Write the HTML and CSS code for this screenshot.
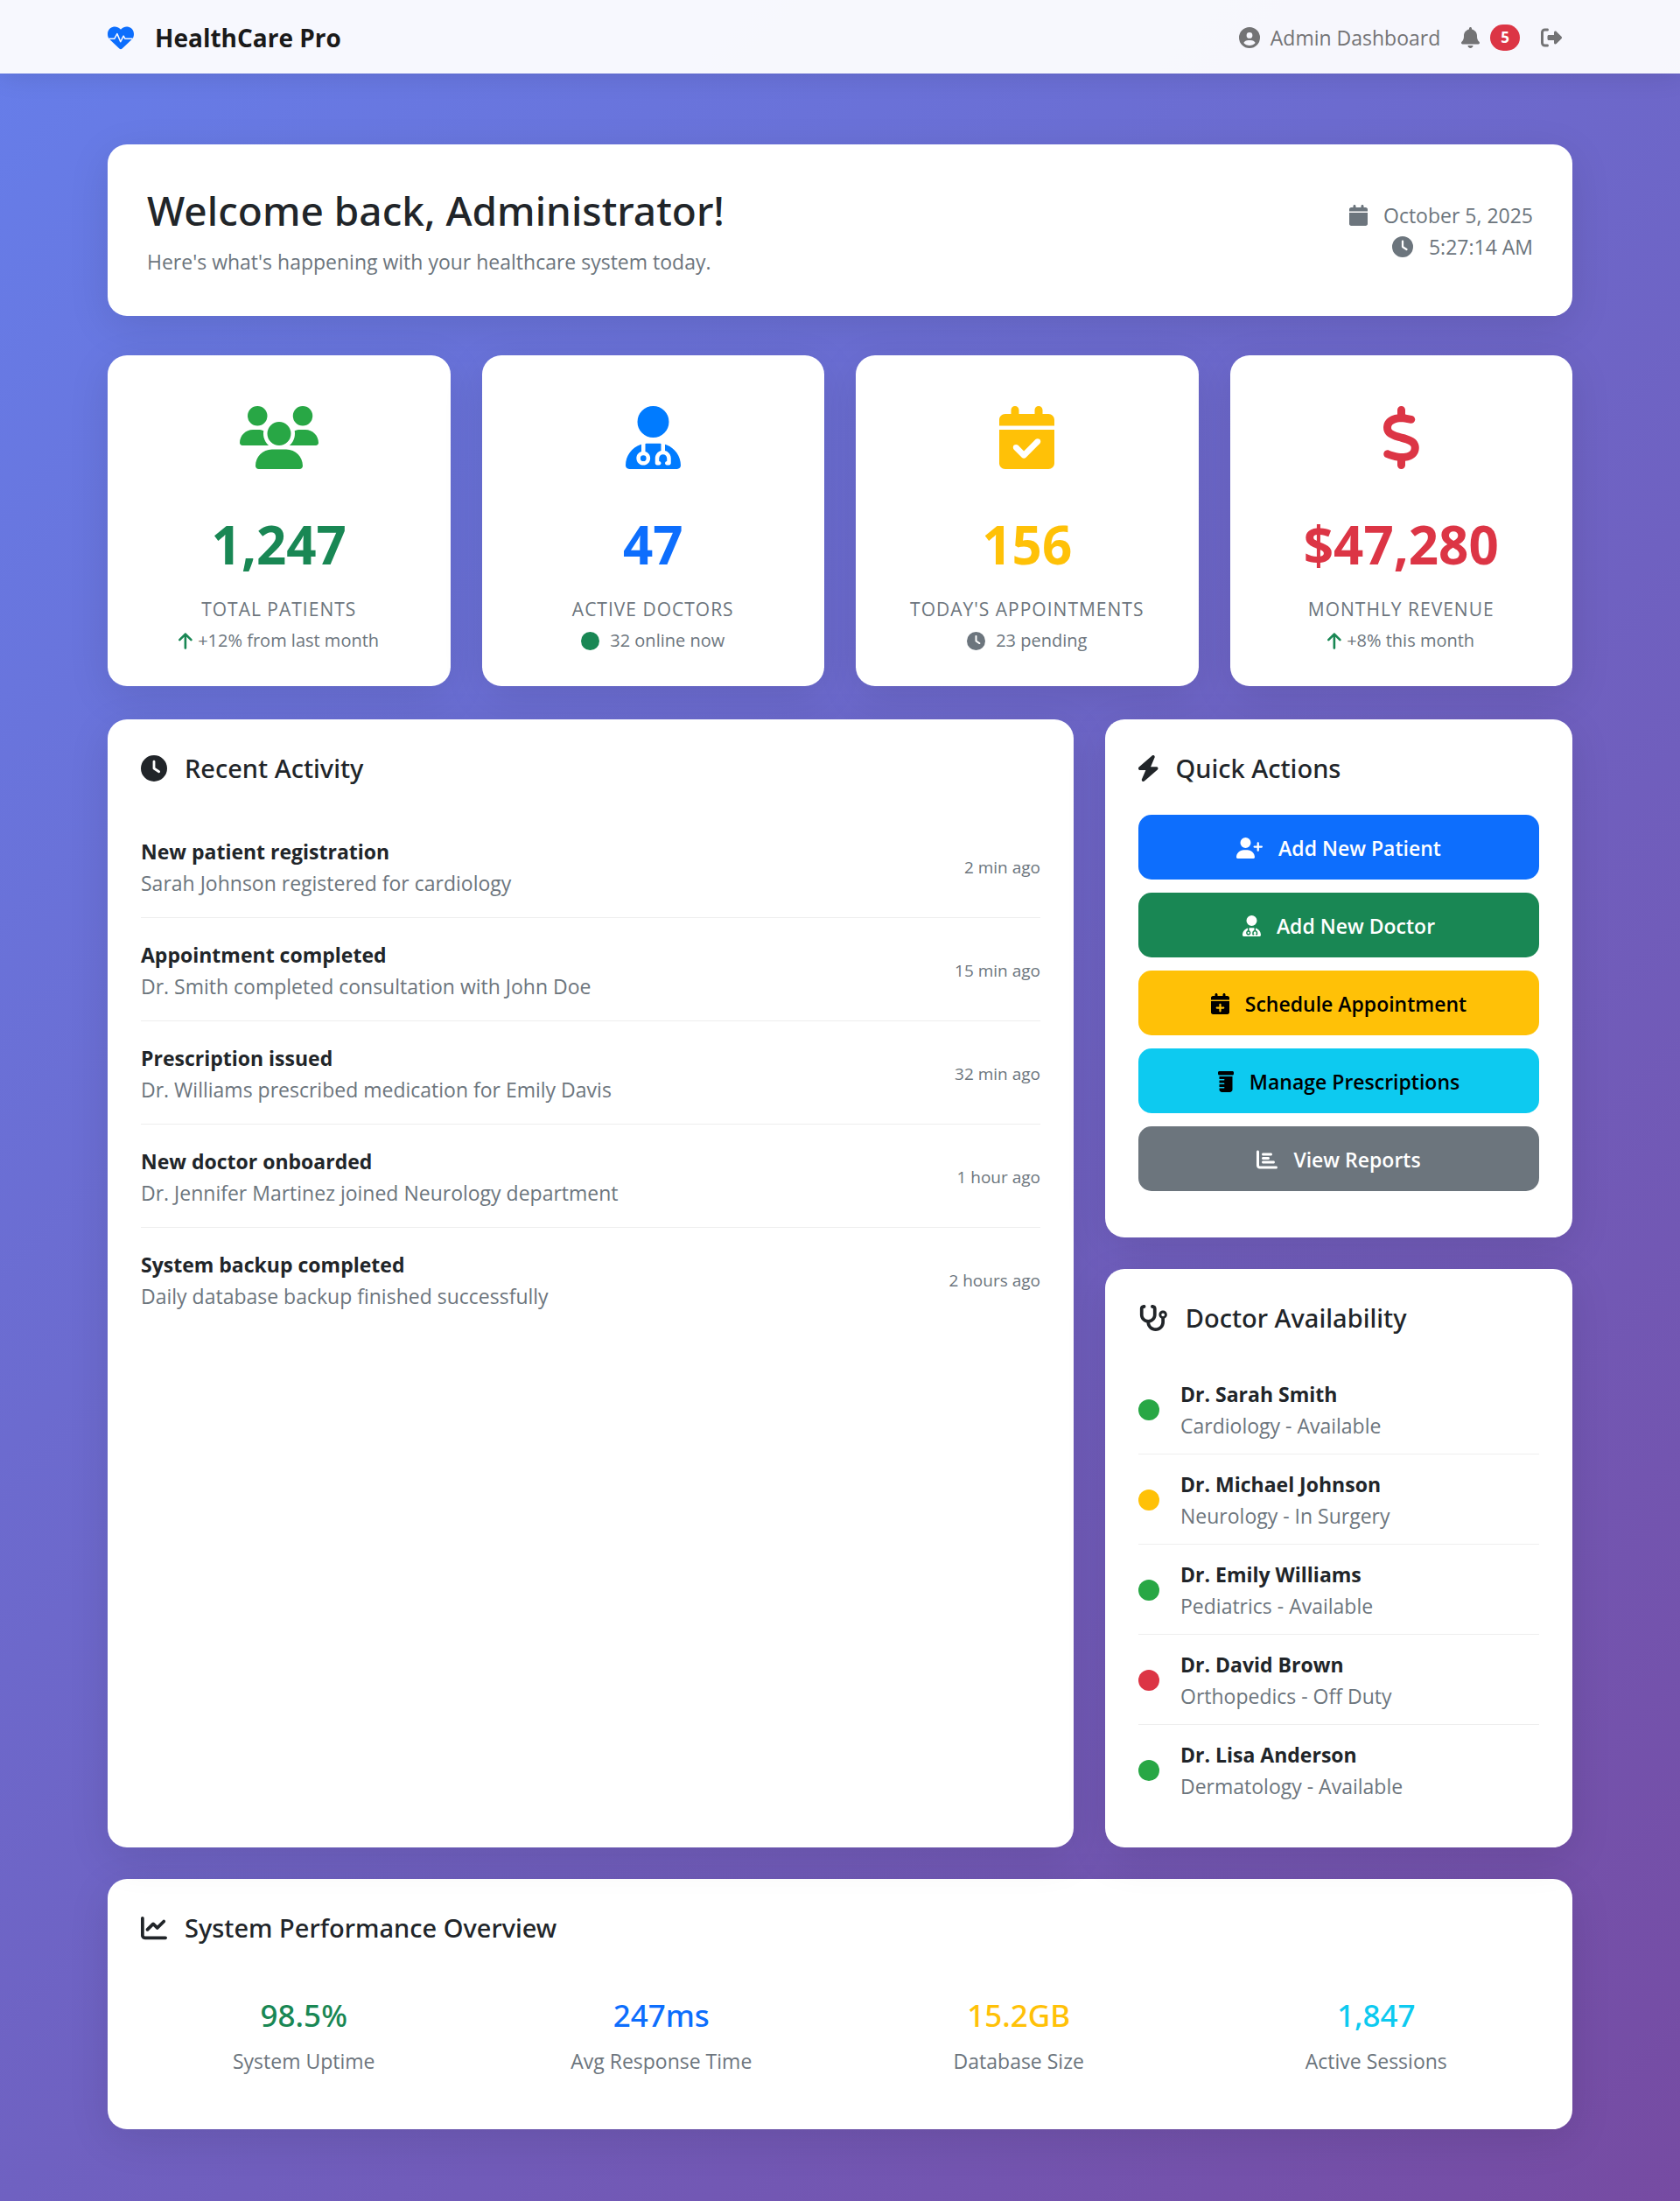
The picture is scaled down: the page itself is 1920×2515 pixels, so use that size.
FILE: index.html
```html
<!DOCTYPE html>
<html lang="en">
<head>
<meta charset="utf-8">
<meta name="viewport" content="width=device-width, initial-scale=1">
<title>HealthCare Pro - Admin Dashboard</title>
<link rel="stylesheet" href="styles.css">
</head>
<body>
<svg class="sprite" aria-hidden="true">
  <defs>
    <g id="i-heart">
      <path d="M47.6 300.4L228.3 469.1c7.5 7 17.4 10.9 27.7 10.9s20.2-3.9 27.7-10.9L464.4 300.4c30.4-28.3 47.6-68 47.6-109.5v-5.8c0-69.9-50.5-129.5-119.4-141C347 36.5 300.6 51.4 268 84L256 96 244 84c-32.6-32.6-79-47.5-124.6-39.9C50.5 55.6 0 115.2 0 185.1v5.8c0 41.5 17.2 81.2 47.6 109.5z"/>
      <path d="M24 276H134L186 182L252 336L310 224L338 276H488" fill="none" stroke="#f7f8fe" stroke-width="26" stroke-linejoin="round"/>
    </g>
    <path id="i-user" d="M399 384.2C376.9 345.8 335.4 320 288 320H224c-47.4 0-88.9 25.8-111 64.2c35.2 39.2 86.2 63.8 143 63.8s107.8-24.7 143-63.8zM0 256a256 256 0 1 1 512 0A256 256 0 1 1 0 256zm256 16a72 72 0 1 0 0-144 72 72 0 1 0 0 144z"/>
    <path id="i-bell" d="M224 0c-17.7 0-32 14.3-32 32V51.2C119 66 64 130.6 64 208v18.8c0 47-17.3 92.4-48.5 127.6l-7.4 8.3c-8.4 9.4-10.4 22.9-5.3 34.4S19.4 416 32 416H416c12.6 0 24-7.4 29.2-18.9s3.1-25-5.3-34.4l-7.4-8.3C401.3 319.2 384 273.9 384 226.8V208c0-77.4-55-142-128-156.8V32c0-17.7-14.3-32-32-32zm45.3 493.3c12-12 18.7-28.3 18.7-45.3H224 160c0 17 6.7 33.3 18.7 45.3s28.3 18.7 45.3 18.7s33.3-6.7 45.3-18.7z"/>
    <path id="i-logout" d="M377.9 105.9L500.7 228.7c7.2 7.2 11.3 17.1 11.3 27.3s-4.1 20.1-11.3 27.3L377.9 406.1c-6.4 6.4-15 9.9-24 9.9c-18.7 0-33.9-15.2-33.9-33.9l0-62.1-128 0c-17.7 0-32-14.3-32-32l0-64c0-17.7 14.3-32 32-32l128 0 0-62.1c0-18.7 15.2-33.9 33.9-33.9c9 0 17.6 3.6 24 9.9zM160 96L96 96c-17.7 0-32 14.3-32 32l0 256c0 17.7 14.3 32 32 32l64 0c17.7 0 32 14.3 32 32s-14.3 32-32 32l-64 0c-53 0-96-43-96-96L0 128C0 75 43 32 96 32l64 0c17.7 0 32 14.3 32 32s-14.3 32-32 32z"/>
    <path id="i-calendar" d="M96 32V64H48C21.5 64 0 85.5 0 112v48H448V112c0-26.5-21.5-48-48-48H352V32c0-17.7-14.3-32-32-32s-32 14.3-32 32V64H160V32c0-17.7-14.3-32-32-32S96 14.3 96 32zM448 192H0V464c0 26.5 21.5 48 48 48H400c26.5 0 48-21.5 48-48V192z"/>
    <path id="i-clock" d="M256 0a256 256 0 1 1 0 512A256 256 0 1 1 256 0zM232 120V256c0 8 4 15.5 10.7 20l96 64c11 7.4 25.9 4.4 33.3-6.7s4.4-25.9-6.7-33.3L280 243.2V120c0-13.3-10.7-24-24-24s-24 10.7-24 24z"/>
    <path id="i-users" d="M144 0a80 80 0 1 1 0 160A80 80 0 1 1 144 0zM512 0a80 80 0 1 1 0 160A80 80 0 1 1 512 0zM0 298.7C0 239.8 47.8 192 106.7 192h42.7c15.9 0 31 3.5 44.6 9.7c-1.3 7.2-1.9 14.7-1.9 22.3c0 38.2 16.8 72.5 43.3 96c-.2 0-.4 0-.7 0H21.3C9.6 320 0 310.4 0 298.7zM405.3 320c-.2 0-.4 0-.7 0c26.6-23.5 43.3-57.8 43.3-96c0-7.6-.7-15-1.9-22.3c13.6-6.3 28.7-9.7 44.6-9.7h42.7C592.2 192 640 239.8 640 298.7c0 11.8-9.6 21.3-21.3 21.3H405.3zM224 224a96 96 0 1 1 192 0 96 96 0 1 1 -192 0zM128 485.3C128 411.7 187.7 352 261.3 352H378.7C452.3 352 512 411.7 512 485.3c0 14.7-11.9 26.7-26.7 26.7H154.7c-14.7 0-26.7-11.9-26.7-26.7z"/>
    <path id="i-doctor" d="M224 256A128 128 0 1 0 224 0a128 128 0 1 0 0 256zm-96 55.2C54 332.9 0 401.3 0 482.3C0 498.7 13.3 512 29.7 512H418.3c16.4 0 29.7-13.3 29.7-29.7c0-81-54-149.4-128-171.1V362c27.6 7.1 48 32.2 48 62v40c0 8.8-7.2 16-16 16H336c-8.8 0-16-7.2-16-16s7.2-16 16-16V424c0-17.7-14.3-32-32-32s-32 14.3-32 32v24c8.8 0 16 7.2 16 16s-7.2 16-16 16H256c-8.8 0-16-7.2-16-16V424c0-29.8 20.4-54.9 48-62V304.9c-6-.6-12.1-.9-18.3-.9H178.3c-6.2 0-12.3 .3-18.3 .9v65.4c23.1 6.9 40 28.3 40 53.7c0 30.9-25.1 56-56 56s-56-25.1-56-56c0-25.4 16.9-46.8 40-53.7V311.2zM144 448a24 24 0 1 0 0-48 24 24 0 1 0 0 48z"/>
    <path id="i-check" d="M128 0c17.7 0 32 14.3 32 32V64H288V32c0-17.7 14.3-32 32-32s32 14.3 32 32V64h48c26.5 0 48 21.5 48 48v48H0V112C0 85.5 21.5 64 48 64H96V32c0-17.7 14.3-32 32-32zM0 192H448V464c0 26.5-21.5 48-48 48H48c-26.5 0-48-21.5-48-48V192zM329 305c9.4-9.4 9.4-24.6 0-33.9s-24.6-9.4-33.9 0l-95 95-47-47c-9.4-9.4-24.6-9.4-33.9 0s-9.4 24.6 0 33.9l64 64c9.4 9.4 24.6 9.4 33.9 0L329 305z"/>
    <path id="i-dollar" d="M160 0c17.7 0 32 14.3 32 32V67.7c1.6 .2 3.1 .4 4.7 .7c.4 .1 .7 .1 1.1 .2l48 8.8c17.4 3.2 28.9 19.9 25.7 37.2s-19.9 28.9-37.2 25.7l-47.5-8.7c-31.3-4.6-58.9-1.5-78.3 6.2s-27.2 18.3-29 28.1c-2 10.7-.5 16.7 1.2 20.4c1.8 3.9 5.5 8.3 12.8 13.2c16.3 10.7 41.3 17.7 73.7 26.3l2.9 .8c28.6 7.6 63.6 16.8 89.6 33.8c14.2 9.3 27.6 21.9 35.9 39.5c8.5 17.9 10.3 37.9 6.4 59.2c-6.9 38-33.1 63.4-65.6 76.7c-13.7 5.6-28.6 9.2-44.4 11V480c0 17.7-14.3 32-32 32s-32-14.3-32-32V445.1c-.4-.1-.9-.1-1.3-.2l-.2 0 0 0c-24.4-3.8-64.5-14.3-91.5-26.3c-16.1-7.2-23.4-26.1-16.2-42.2s26.1-23.4 42.2-16.2c20.9 9.3 55.3 18.5 75.2 21.6c31.9 4.7 58.2 2 76-5.3c16.9-6.9 24.6-16.9 26.8-28.9c1.9-10.6 .4-16.7-1.3-20.4c-1.9-4-5.6-8.4-13-13.3c-16.4-10.7-41.5-17.7-74-26.3l-2.8-.7 0 0C119.4 279.3 84.4 270 58.4 253c-14.2-9.3-27.5-22-35.8-39.6c-8.4-17.9-10.1-37.9-6.1-59.2C23.7 116 52.3 91.2 84.8 78.3c13.3-5.3 27.9-8.9 43.2-11V32c0-17.7 14.3-32 32-32z"/>
    <path id="i-up" d="M214.6 41.4c-12.5-12.5-32.8-12.5-45.3 0l-160 160c-12.5 12.5-12.5 32.8 0 45.3s32.8 12.5 45.3 0L160 141.2V448c0 17.7 14.3 32 32 32s32-14.3 32-32V141.2L329.4 246.6c12.5 12.5 32.8 12.5 45.3 0s12.5-32.8 0-45.3l-160-160z"/>
    <path id="i-bolt" d="M349.4 44.6c5.9-13.7 1.5-29.7-10.6-38.5s-28.6-8-39.9 1.8l-256 224c-10 8.8-13.6 22.9-8.9 35.3S50.7 288 64 288H175.5L98.6 467.4c-5.9 13.7-1.5 29.7 10.6 38.5s28.6 8 39.9-1.8l256-224c10-8.8 13.6-22.9 8.9-35.3s-16.6-20.7-30-20.7H272.5L349.4 44.6z"/>
    <path id="i-user-plus" d="M96 128a128 128 0 1 1 256 0A128 128 0 1 1 96 128zM0 482.3C0 383.8 79.8 304 178.3 304h91.4C368.2 304 448 383.8 448 482.3c0 16.4-13.3 29.7-29.7 29.7H29.7C13.3 512 0 498.7 0 482.3zM504 312V248H440c-13.3 0-24-10.7-24-24s10.7-24 24-24h64V136c0-13.3 10.7-24 24-24s24 10.7 24 24v64h64c13.3 0 24 10.7 24 24s-10.7 24-24 24H552v64c0 13.3-10.7 24-24 24s-24-10.7-24-24z"/>
    <path id="i-cal-plus" fill-rule="evenodd" d="M96 32V64H48C21.5 64 0 85.5 0 112v48H448V112c0-26.5-21.5-48-48-48H352V32c0-17.7-14.3-32-32-32s-32 14.3-32 32V64H160V32c0-17.7-14.3-32-32-32S96 14.3 96 32zM448 192H0V464c0 26.5 21.5 48 48 48H400c26.5 0 48-21.5 48-48V192zM200 272v56h-56c-13.3 0-24 10.7-24 24s10.7 24 24 24h56v56c0 13.3 10.7 24 24 24s24-10.7 24-24v-56h56c13.3 0 24-10.7 24-24s-10.7-24-24-24h-56v-56c0-13.3-10.7-24-24-24s-24 10.7-24 24z"/>
    <path id="i-bottle" d="M0 32C0 14.3 14.3 0 32 0H352c17.7 0 32 14.3 32 32V64c0 17.7-14.3 32-32 32H32C14.3 96 0 81.7 0 64V32zm32 96H352V448c0 35.3-28.7 64-64 64H96c-35.3 0-64-28.7-64-64V416H144c8.8 0 16-7.2 16-16s-7.2-16-16-16H32V320H144c8.8 0 16-7.2 16-16s-7.2-16-16-16H32V224H144c8.8 0 16-7.2 16-16s-7.2-16-16-16H32V128z"/>
    <path id="i-bars" d="M32 32c17.7 0 32 14.3 32 32V400c0 8.8 7.2 16 16 16H480c17.7 0 32 14.3 32 32s-14.3 32-32 32H80c-44.2 0-80-35.8-80-80V64C0 46.3 14.3 32 32 32zm96 96c0-17.7 14.3-32 32-32l192 0c17.7 0 32 14.3 32 32s-14.3 32-32 32H160c-17.7 0-32-14.3-32-32zm32 64H288c17.7 0 32 14.3 32 32s-14.3 32-32 32H160c-17.7 0-32-14.3-32-32s14.3-32 32-32zm0 96H416c17.7 0 32 14.3 32 32s-14.3 32-32 32H160c-17.7 0-32-14.3-32-32s14.3-32 32-32z"/>
    <path id="i-steth" d="M142.4 21.9c5.6 16.8-3.5 34.9-20.2 40.5L96 71.1V192c0 53 43 96 96 96s96-43 96-96V71.1l-26.1-8.7c-16.8-5.6-25.8-23.7-20.2-40.5s23.7-25.8 40.5-20.2l26.1 8.7C334.4 19.1 352 43.5 352 71.1V192c0 77.2-54.6 141.6-127.3 156.7C231 404.6 278.4 448 336 448c61.9 0 112-50.1 112-112V265.3c-28.3-12.3-48-40.5-48-73.3c0-44.2 35.8-80 80-80s80 35.8 80 80c0 32.8-19.7 61-48 73.3V336c0 97.2-78.8 176-176 176c-92.9 0-168.9-71.9-175.5-163.1C87.2 334.2 32 269.6 32 192V71.1c0-27.5 17.6-52 43.8-60.7l26.1-8.7c16.8-5.6 34.9 3.5 40.5 20.2zM480 224a32 32 0 1 0 0-64 32 32 0 1 0 0 64z"/>
    <path id="i-line" d="M64 64c0-17.7-14.3-32-32-32S0 46.3 0 64V400c0 44.2 35.8 80 80 80H480c17.7 0 32-14.3 32-32s-14.3-32-32-32H80c-8.8 0-16-7.2-16-16V64zm406.6 86.6c12.5-12.5 12.5-32.8 0-45.3s-32.8-12.5-45.3 0L320 210.7l-57.4-57.4c-12.5-12.5-32.8-12.5-45.3 0l-112 112c-12.5 12.5-12.5 32.8 0 45.3s32.8 12.5 45.3 0L240 221.3l57.4 57.4c12.5 12.5 32.8 12.5 45.3 0l128-128z"/>
    <circle id="i-dot" cx="256" cy="256" r="256"/>
  </defs>
</svg>

<header class="navbar">
  <nav class="container navbar-inner">
    <a class="brand" href="#"><svg class="icon icon-md blue" viewBox="0 0 512 512"><use href="#i-heart"/></svg>HealthCare Pro</a>
    <div class="nav-links">
      <a class="nav-link" href="#"><svg class="icon" viewBox="0 0 512 512"><use href="#i-user"/></svg>Admin Dashboard</a>
      <a class="nav-link" href="#" aria-label="Notifications"><svg class="icon" viewBox="0 0 448 512"><use href="#i-bell"/></svg><span class="badge">5</span></a>
      <a class="nav-link" href="#" aria-label="Log out"><svg class="icon" viewBox="0 0 512 512"><use href="#i-logout"/></svg></a>
    </div>
  </nav>
</header>

<main class="container content">
  <section class="card welcome">
    <div>
      <h1>Welcome back, Administrator!</h1>
      <p class="muted">Here's what's happening with your healthcare system today.</p>
    </div>
    <div class="now muted">
      <div class="now-line"><svg class="icon" viewBox="0 0 448 512"><use href="#i-calendar"/></svg>October 5, 2025</div>
      <div class="now-line"><svg class="icon" viewBox="0 0 512 512"><use href="#i-clock"/></svg>5:27:14 AM</div>
    </div>
  </section>

  <section class="stats">
    <article class="card stat">
      <svg class="icon icon-xl lime" viewBox="0 0 640 512"><use href="#i-users"/></svg>
      <div class="stat-value green">1,247</div>
      <div class="stat-label">Total Patients</div>
      <div class="stat-note tight"><svg class="icon icon-sm green" viewBox="0 0 384 512"><use href="#i-up"/></svg>+12% from last month</div>
    </article>
    <article class="card stat">
      <svg class="icon icon-xl azure" viewBox="0 0 448 512"><use href="#i-doctor"/></svg>
      <div class="stat-value blue">47</div>
      <div class="stat-label">Active Doctors</div>
      <div class="stat-note"><svg class="icon icon-sm green" viewBox="0 0 512 512"><use href="#i-dot"/></svg>32 online now</div>
    </article>
    <article class="card stat">
      <svg class="icon icon-xl yellow" viewBox="0 0 448 512"><use href="#i-check"/></svg>
      <div class="stat-value yellow">156</div>
      <div class="stat-label">Today's Appointments</div>
      <div class="stat-note"><svg class="icon icon-sm" viewBox="0 0 512 512"><use href="#i-clock"/></svg>23 pending</div>
    </article>
    <article class="card stat">
      <svg class="icon icon-xl red" viewBox="0 0 320 512"><use href="#i-dollar"/></svg>
      <div class="stat-value red">$47,280</div>
      <div class="stat-label">Monthly Revenue</div>
      <div class="stat-note tight"><svg class="icon icon-sm green" viewBox="0 0 384 512"><use href="#i-up"/></svg>+8% this month</div>
    </article>
  </section>

  <div class="columns">
    <section class="card panel wide">
      <h2><svg class="icon icon-md" viewBox="0 0 512 512"><use href="#i-clock"/></svg>Recent Activity</h2>
      <ul class="list activity">
        <li><div><strong>New patient registration</strong><p class="muted">Sarah Johnson registered for cardiology</p></div><time>2 min ago</time></li>
        <li><div><strong>Appointment completed</strong><p class="muted">Dr. Smith completed consultation with John Doe</p></div><time>15 min ago</time></li>
        <li><div><strong>Prescription issued</strong><p class="muted">Dr. Williams prescribed medication for Emily Davis</p></div><time>32 min ago</time></li>
        <li><div><strong>New doctor onboarded</strong><p class="muted">Dr. Jennifer Martinez joined Neurology department</p></div><time>1 hour ago</time></li>
        <li><div><strong>System backup completed</strong><p class="muted">Daily database backup finished successfully</p></div><time>2 hours ago</time></li>
      </ul>
    </section>

    <div class="side">
      <section class="card panel">
        <h2><svg class="icon icon-md" viewBox="32 0 384 512"><use href="#i-bolt"/></svg>Quick Actions</h2>
        <div class="actions">
          <button type="button" class="btn btn-primary"><svg class="icon" viewBox="0 0 640 512"><use href="#i-user-plus"/></svg>Add New Patient</button>
          <button type="button" class="btn btn-success"><svg class="icon" viewBox="0 0 448 512"><use href="#i-doctor"/></svg>Add New Doctor</button>
          <button type="button" class="btn btn-warning"><svg class="icon" viewBox="0 0 448 512"><use href="#i-cal-plus"/></svg>Schedule Appointment</button>
          <button type="button" class="btn btn-info"><svg class="icon" viewBox="0 0 384 512"><use href="#i-bottle"/></svg>Manage Prescriptions</button>
          <button type="button" class="btn btn-secondary"><svg class="icon" viewBox="0 0 512 512"><use href="#i-bars"/></svg>View Reports</button>
        </div>
      </section>

      <section class="card panel">
        <h2><svg class="icon icon-md" viewBox="0 0 576 512"><use href="#i-steth"/></svg>Doctor Availability</h2>
        <ul class="list doctors">
          <li><svg class="icon lime" viewBox="0 0 512 512"><use href="#i-dot"/></svg><div><strong>Dr. Sarah Smith</strong><p class="muted">Cardiology - Available</p></div></li>
          <li><svg class="icon yellow" viewBox="0 0 512 512"><use href="#i-dot"/></svg><div><strong>Dr. Michael Johnson</strong><p class="muted">Neurology - In Surgery</p></div></li>
          <li><svg class="icon lime" viewBox="0 0 512 512"><use href="#i-dot"/></svg><div><strong>Dr. Emily Williams</strong><p class="muted">Pediatrics - Available</p></div></li>
          <li><svg class="icon red" viewBox="0 0 512 512"><use href="#i-dot"/></svg><div><strong>Dr. David Brown</strong><p class="muted">Orthopedics - Off Duty</p></div></li>
          <li><svg class="icon lime" viewBox="0 0 512 512"><use href="#i-dot"/></svg><div><strong>Dr. Lisa Anderson</strong><p class="muted">Dermatology - Available</p></div></li>
        </ul>
      </section>
    </div>
  </div>

  <section class="card panel">
    <h2><svg class="icon icon-md" viewBox="0 0 512 512"><use href="#i-line"/></svg>System Performance Overview</h2>
    <div class="metrics">
      <div><div class="metric-value green">98.5%</div><p class="muted">System Uptime</p></div>
      <div><div class="metric-value blue">247ms</div><p class="muted">Avg Response Time</p></div>
      <div><div class="metric-value yellow">15.2GB</div><p class="muted">Database Size</p></div>
      <div><div class="metric-value cyan">1,847</div><p class="muted">Active Sessions</p></div>
    </div>
  </section>
</main>
</body>
</html>
```
FILE: styles.css
```css
* {
  box-sizing: border-box;
}

body {
  margin: 0;
  min-height: 100vh;
  font-family: "Open Sans", "Noto Sans", sans-serif;
  font-size: 23px;
  line-height: 36px;
  color: #212529;
  background: linear-gradient(135deg, #667eea 0%, #764ba2 100%);
}

h1, h2, p, ul {
  margin: 0;
  padding: 0;
}

h1, h2, .metric-value {
  font-family: "Noto Sans", "Open Sans", sans-serif;
  font-weight: 500;
}

.sprite {
  display: none;
}

.container {
  width: 100%;
  max-width: 1710px;
  margin: 0 auto;
  padding: 0 18px;
}

.icon {
  height: 24px;
  flex: none;
  fill: currentColor;
}
.icon-sm { height: 21px; }
.icon-md { height: 30px; }
.icon-xl { height: 72px; }

.muted { color: #6c757d; }
.green { color: #198754; }
.lime { color: #28a745; }
.blue { color: #0d6efd; }
.azure { color: #007bff; }
.yellow { color: #ffc107; }
.red { color: #dc3545; }
.cyan { color: #0dcaf0; }

/* Top bar */
.navbar {
  background: rgba(255, 255, 255, 0.95);
  box-shadow: 0 3px 30px rgba(0, 0, 0, 0.1);
}
.navbar-inner {
  display: flex;
  align-items: center;
  justify-content: space-between;
  min-height: 84px;
  padding-top: 2px;
}
.brand {
  display: flex;
  align-items: center;
  gap: 24px;
  font-size: 28px;
  font-weight: 700;
  color: #1a1a1a;
  text-decoration: none;
}
.nav-links {
  display: flex;
  gap: 24px;
  padding-right: 12px;
}
.nav-link {
  display: flex;
  align-items: center;
  gap: 12px;
  color: #737375;
  text-decoration: none;
}
.badge {
  padding: 0 12px;
  border-radius: 15px;
  background: #dc3545;
  color: #fff;
  font-size: 17px;
  font-weight: 700;
  line-height: 30px;
}

/* Cards */
.content {
  padding-top: 81px;
  padding-bottom: 82px;
}
.card {
  background: #fff;
  border-radius: 22px;
  box-shadow: 0 12px 48px rgba(0, 0, 0, 0.1);
}

.welcome {
  display: flex;
  align-items: center;
  justify-content: space-between;
  padding: 46px 45px 44px;
  margin-bottom: 45px;
}
.welcome h1 {
  margin-bottom: 12px;
  font-size: 46px;
  line-height: 58px;
}
.now-line {
  display: flex;
  align-items: center;
  justify-content: flex-end;
  gap: 18px;
}

.stats {
  display: grid;
  grid-template-columns: repeat(4, 1fr);
  gap: 36px;
  margin-bottom: 38px;
}
.stat {
  display: flex;
  flex-direction: column;
  align-items: center;
  padding: 58px 36px 34px;
}
.stat-value {
  margin: 50px 0 20px;
  font-size: 60px;
  font-weight: 700;
  line-height: 72px;
}
.stat-label {
  color: #6c757d;
  font-size: 21px;
  letter-spacing: 1px;
  text-transform: uppercase;
}
.stat-note {
  display: flex;
  align-items: center;
  gap: 12px;
  color: #6c757d;
  font-size: 20px;
}
.stat-note.tight { gap: 6px; }

.columns {
  display: grid;
  grid-template-columns: repeat(12, 1fr);
  gap: 36px;
  margin-bottom: 36px;
}
.wide { grid-column: span 8; }
.side {
  grid-column: span 4;
  display: flex;
  flex-direction: column;
  gap: 36px;
}

.panel {
  padding: 38px;
}
.panel h2 {
  display: flex;
  align-items: center;
  gap: 20px;
  margin-bottom: 35px;
  font-size: 29px;
}

.list {
  list-style: none;
}
.list li {
  display: flex;
  align-items: center;
  border-bottom: 1px solid #eee;
}
.list li:last-child { border-bottom: 0; }
.list strong {
  display: block;
  font-weight: 700;
}
.activity li {
  justify-content: space-between;
  padding: 24px 0 21px;
}
.activity time {
  color: #6c757d;
  font-size: 19px;
}
.doctors li {
  gap: 24px;
  padding: 16px 0 14px;
}

.actions {
  display: flex;
  flex-direction: column;
  gap: 15px;
  padding-bottom: 15px;
}
.btn {
  display: flex;
  align-items: center;
  justify-content: center;
  gap: 18px;
  padding: 20px 20px 18px;
  border: 0;
  border-radius: 15px;
  font: inherit;
  font-weight: 600;
  color: #fff;
  cursor: pointer;
}
.btn-primary { background: #0d6efd; }
.btn-success { background: #198754; }
.btn-warning { background: #ffc107; color: #000; }
.btn-info { background: #0dcaf0; color: #000; }
.btn-secondary { background: #6c757d; }

.metrics {
  display: grid;
  grid-template-columns: repeat(4, 1fr);
  gap: 36px;
  padding: 25px 0 22px;
  text-align: center;
}
.metric-value {
  margin-bottom: 12px;
  font-size: 35px;
  line-height: 44px;
}
```
